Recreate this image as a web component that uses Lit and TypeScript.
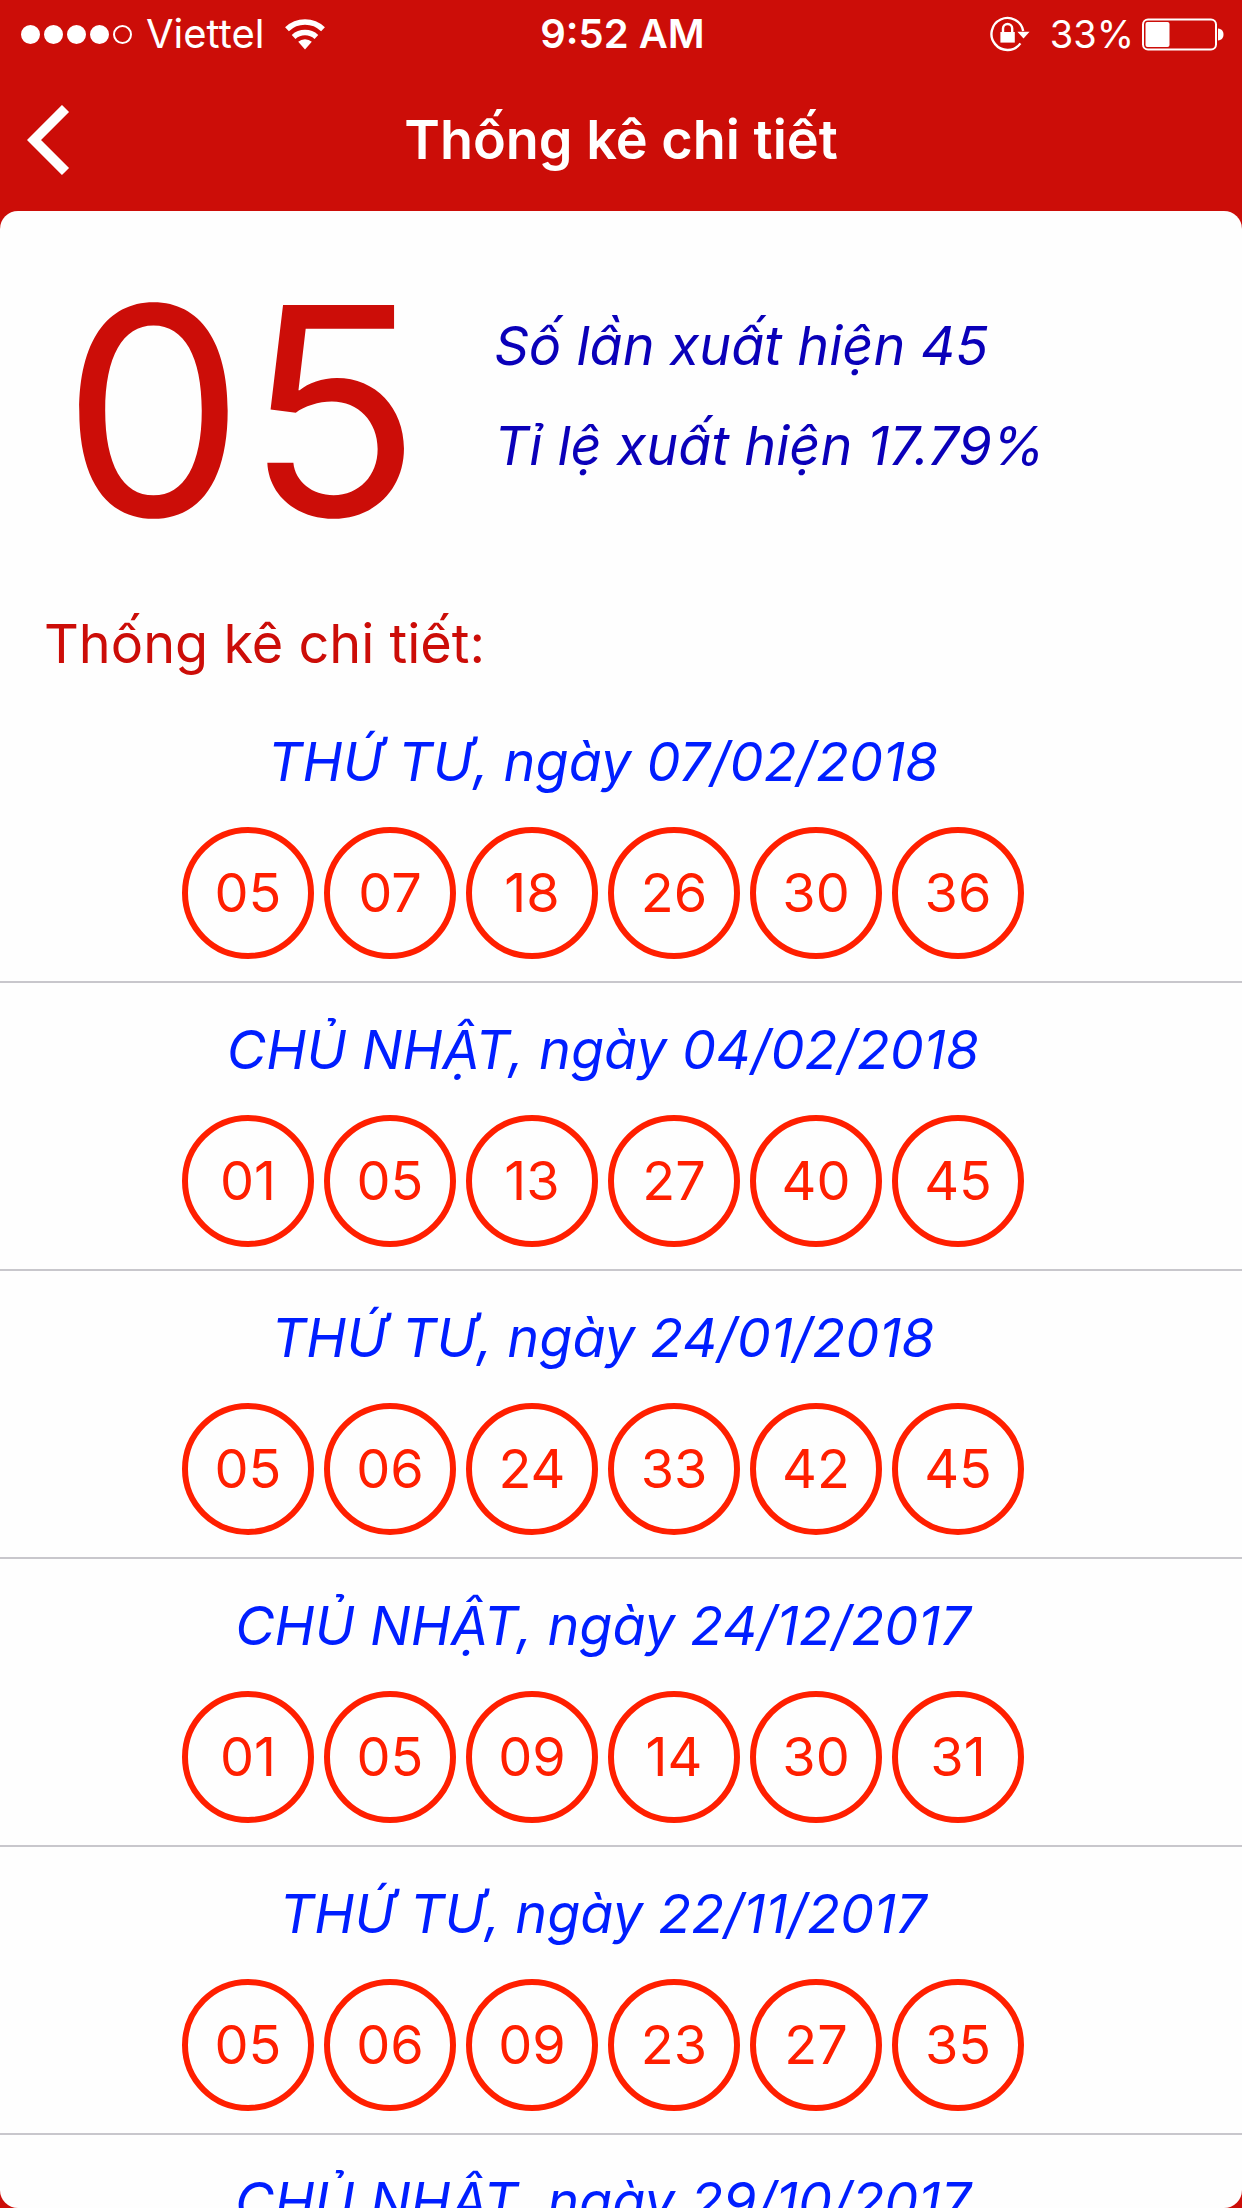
import { LitElement, html, css, svg } from "lit";
import { customElement, property } from "lit/decorators.js";

interface Draw {
  day: string;
  date: string;
  balls: string[];
}

const DRAWS: Draw[] = [
  { day: "THỨ TƯ", date: "07/02/2018", balls: ["05", "07", "18", "26", "30", "36"] },
  { day: "CHỦ NHẬT", date: "04/02/2018", balls: ["01", "05", "13", "27", "40", "45"] },
  { day: "THỨ TƯ", date: "24/01/2018", balls: ["05", "06", "24", "33", "42", "45"] },
  { day: "CHỦ NHẬT", date: "24/12/2017", balls: ["01", "05", "09", "14", "30", "31"] },
  { day: "THỨ TƯ", date: "22/11/2017", balls: ["05", "06", "09", "23", "27", "35"] },
  { day: "CHỦ NHẬT", date: "29/10/2017", balls: [] },
];

@customElement("status-bar")
class StatusBar extends LitElement {
  static styles = css`
    :host {
      display: grid;
      grid-template-columns: 1fr auto 1fr;
      align-items: center;
      height: 68px;
      padding: 0 18px 0 21px;
      color: #fff;
      font-size: 40px;
      line-height: 48px;
    }
    .side {
      display: flex;
      align-items: center;
    }
    .end {
      justify-content: flex-end;
    }
    .dots {
      display: flex;
      gap: 4px;
      margin-right: 14px;
    }
    .dot {
      box-sizing: border-box;
      width: 19px;
      height: 19px;
      border: 2px solid #fff;
      border-radius: 50%;
    }
    .on {
      background: #fff;
    }
    .wifi {
      margin-left: 21px;
    }
    .lock {
      margin-right: 20px;
    }
    .battery {
      margin-left: 8px;
    }
    .charge {
      font-size: 38px;
    }
    .time {
      font-weight: 600;
    }
    svg {
      display: block;
    }
  `;

  render() {
    return html`
      <div class="side">
        <span class="dots">
          ${[1, 1, 1, 1, 0].map((on) => html`<span class="dot ${on ? "on" : ""}"></span>`)}
        </span>
        <span>Viettel</span>
        <svg class="wifi" width="40" height="31" viewBox="0 0 40 31" aria-hidden="true">
          <g fill="none" stroke="#fff" stroke-width="5.5">
            <path d="M2 10.2a26 26 0 0 1 36 0" />
            <path d="M8.6 18a17 17 0 0 1 22.8 0" />
          </g>
          <path fill="#fff" d="M13.2 22.800a10 10 0 0 1 13.600 0L20 30.600z" />
        </svg>
      </div>
      <span class="time">9:52 AM</span>
      <div class="side end">
        <svg class="lock" width="40" height="36" viewBox="0 0 40 36" aria-hidden="true">
          <path fill="none" stroke="#fff" stroke-width="2.4" d="M33.2 15A16 16 0 1 0 30.4 27.4" />
          <path fill="#fff" d="M27.4 15.8h12.2L33.5 22.6z" />
          <path fill="#fff" d="M10.4 16h14.4v10.6H10.4z" />
          <path fill="none" stroke="#fff" stroke-width="2.4" d="M13 17v-4.4a4.6 4.6 0 0 1 9.2 0V17" />
        </svg>
        <span class="charge">33%</span>
        <svg class="battery" width="82" height="33" viewBox="0 0 82 33" aria-hidden="true">
          <rect x="1" y="1.5" width="73" height="30" rx="5" fill="none" stroke="#fff" stroke-width="2" />
          <rect x="3.5" y="4" width="24" height="25" rx="2" fill="#fff" />
          <path fill="#fff" d="M76 10.500c4 .5 5.500 3 5.500 6s-1.500 5.500-5.500 6z" />
        </svg>
      </div>
    `;
  }
}

@customElement("draw-row")
class DrawRow extends LitElement {
  @property({ attribute: false }) draw!: Draw;

  static styles = css`
    :host {
      display: flex;
      flex-direction: column;
      align-items: center;
      gap: 31px;
      padding: 33px 36px 22px 0;
      border-bottom: 2px solid #c8c7cc;
    }
    .date {
      margin: 0;
      color: #001eff;
      font-size: 54px;
      font-style: italic;
      font-weight: 400;
      line-height: 68px;
      white-space: nowrap;
    }
    .balls {
      display: flex;
      gap: 10px;
      margin: 0;
      padding: 0;
      list-style: none;
    }
    .ball {
      box-sizing: border-box;
      display: flex;
      align-items: center;
      justify-content: center;
      width: 132px;
      height: 132px;
      border: 6px solid #ff1f00;
      border-radius: 50%;
      color: #ff1f00;
      font-size: 54px;
      line-height: 68px;
    }
  `;

  render() {
    const { day, date, balls } = this.draw;
    return html`
      <h3 class="date">${day}, ngày ${date}</h3>
      <ul class="balls">
        ${balls.map((ball) => html`<li class="ball">${ball}</li>`)}
      </ul>
    `;
  }
}

@customElement("app-root")
class AppRoot extends LitElement {
  static styles = css`
    :host {
      display: flex;
      flex-direction: column;
      height: 100vh;
      background: #cc0d08;
      font-family: Inter, "Liberation Sans", sans-serif;
    }
    .nav {
      display: grid;
      grid-template-columns: 120px 1fr 120px;
      align-items: center;
      height: 143px;
      color: #fff;
    }
    .back {
      display: flex;
      padding: 20px 27px;
      border: 0;
      background: none;
      cursor: pointer;
    }
    .title {
      margin: 0;
      font-size: 54px;
      font-weight: 600;
      line-height: 68px;
      text-align: center;
    }
    .card {
      flex: 1;
      min-height: 0;
      overflow: hidden;
      border-radius: 18px;
      background: #fefefe;
    }
    .hero {
      display: flex;
      align-items: center;
      height: 399px;
      padding-left: 62px;
      gap: 73px;
    }
    .number {
      color: #cc0d08;
      font-size: 290px;
      line-height: 350px;
    }
    .facts {
      padding-bottom: 30px;
      color: #0a00b9;
      font-size: 54px;
      font-style: italic;
      line-height: 100px;
    }
    .fact {
      margin: 0;
    }
    .label {
      margin: 0;
      padding: 0 44px 17px;
      color: #cc0d08;
      font-size: 54px;
      font-weight: 400;
      line-height: 68px;
    }
  `;

  render() {
    return html`
      <status-bar></status-bar>
      <header class="nav">
        <button class="back" aria-label="Quay lại">
          ${svg`<svg width="43" height="70" viewBox="0 0 43 70"><path d="M38.500 3.500 7 35l31.500 31.500" fill="none" stroke="#fff" stroke-width="10"/></svg>`}
        </button>
        <h1 class="title">Thống kê chi tiết</h1>
      </header>
      <main class="card">
        <section class="hero">
          <div class="number">05</div>
          <div class="facts">
            <p class="fact">Số lần xuất hiện 45</p>
            <p class="fact">Tỉ lệ xuất hiện 17.79%</p>
          </div>
        </section>
        <h2 class="label">Thống kê chi tiết:</h2>
        ${DRAWS.map((draw) => html`<draw-row .draw=${draw}></draw-row>`)}
      </main>
    `;
  }
}
